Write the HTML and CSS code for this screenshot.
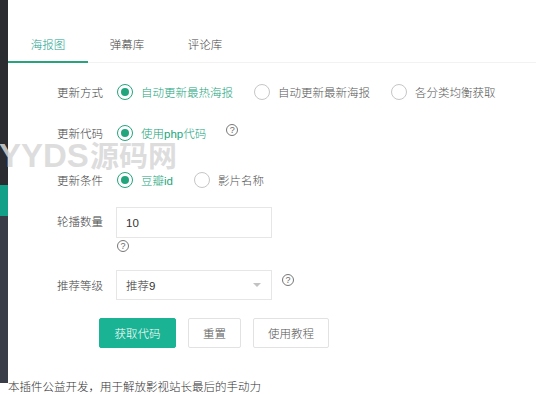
FILE: index.html
```html
<!DOCTYPE html>
<html lang="zh-CN">
<head>
    <meta charset="UTF-8">
    <meta name="viewport" content="width=device-width, initial-scale=1.0">
    <title>海报图</title>
    <link rel="stylesheet" href="styles.css">
</head>
<body>
    <div class="sidebar">
        <div class="side-top"></div>
        <div class="side-active"></div>
        <div class="side-rest"></div>
    </div>

    <div class="main">
        <div class="tabs">
            <span class="tab active">海报图</span>
            <span class="tab">弹幕库</span>
            <span class="tab">评论库</span>
        </div>

        <div class="form">
            <div class="row row-mode">
                <label class="label">更新方式</label>
                <span class="radio checked"><i class="dot"></i>自动更新最热海报</span>
                <span class="radio"><i class="dot"></i>自动更新最新海报</span>
                <span class="radio"><i class="dot"></i>各分类均衡获取</span>
            </div>

            <div class="row row-code">
                <label class="label">更新代码</label>
                <span class="radio checked"><i class="dot"></i>使用php代码</span>
                <span class="help help-code">?</span>
            </div>

            <div class="row row-cond">
                <label class="label">更新条件</label>
                <span class="radio checked"><i class="dot"></i>豆瓣id</span>
                <span class="radio"><i class="dot"></i>影片名称</span>
            </div>

            <div class="row row-num">
                <label class="label">轮播数量</label>
                <div class="field">
                    <input class="input" type="text" value="10">
                    <span class="help help-under">?</span>
                </div>
            </div>

            <div class="row row-level">
                <label class="label">推荐等级</label>
                <div class="select">
                    <span>推荐9</span>
                    <i class="arrow"></i>
                </div>
                <span class="help help-level">?</span>
            </div>

            <div class="buttons">
                <button class="btn btn-primary">获取代码</button>
                <button class="btn btn-reset">重置</button>
                <button class="btn btn-help">使用教程</button>
            </div>
        </div>

        <p class="note">本插件公益开发，用于解放影视站长最后的手动力</p>
    </div>

    <div class="watermark"><span class="wm-latin">YYDS</span>源码网</div>
</body>
</html>
```

FILE: styles.css
```css
body {
    margin: 0;
    font-family: "Liberation Sans", "Noto Sans CJK SC", sans-serif;
    font-size: 11.5px;
    font-weight: 300;
    color: #444;
    display: flex;
    align-items: flex-start;
    background: #fff;
}
.sidebar {
    width: 8px;
    flex-shrink: 0;
    display: flex;
    flex-direction: column;
}
.side-top {
    height: 185px;
    background-color: #2a2c32;
}
.side-active {
    height: 31px;
    background-color: #12a089;
}
.side-rest {
    height: 167px;
    background-color: #393d48;
}
.main {
    flex: 1;
    margin-left: -8px;
    padding-left: 8px;
    min-width: 0;
}
.tabs {
    margin-top: 28px;
    height: 34px;
    border-bottom: 1px solid #f2f2f2;
    display: flex;
}
.tab {
    width: 78px;
    line-height: 34px;
    text-align: center;
    color: #444;
}
.tab.active {
    width: 80px;
    color: #21a38f;
    border-bottom: 2px solid #2aa37d;
    height: 33px;
}
.row {
    display: flex;
    align-items: center;
    height: 30px;
}
.row-mode { margin-top: 14px; }
.row-code { margin-top: 11px; }
.row-cond { margin-top: 17px; }
.row-num {
    margin-top: 12px;
    height: auto;
    align-items: flex-start;
}
.row-level { margin-top: 18px; }
.label {
    width: 95px;
    padding-right: 5px;
    margin-right: 9px;
    text-align: right;
    color: #444;
    flex-shrink: 0;
}
.row-num .label {
    line-height: 31px;
}
.radio {
    display: inline-flex;
    align-items: center;
    color: #555;
    margin-right: 21px;
    white-space: nowrap;
}
.dot {
    width: 16px;
    height: 16px;
    box-sizing: border-box;
    border: 1px solid #c6c6c6;
    border-radius: 50%;
    margin-right: 8px;
    display: inline-flex;
    align-items: center;
    justify-content: center;
}
.radio.checked {
    color: #22a57c;
}
.radio.checked .dot {
    border-color: #22a57c;
}
.radio.checked .dot::after {
    content: "";
    width: 8px;
    height: 8px;
    border-radius: 50%;
    background-color: #22a57c;
}
.help {
    width: 12px;
    height: 12px;
    box-sizing: border-box;
    border: 1px solid #777;
    border-radius: 50%;
    font-size: 9px;
    line-height: 10px;
    text-align: center;
    color: #666;
    flex-shrink: 0;
}
.help-code {
    align-self: flex-start;
    margin-top: 6px;
    margin-left: -1px;
}
.field {
    display: flex;
    flex-direction: column;
    margin-left: -1px;
}
.input {
    width: 156px;
    height: 31px;
    box-sizing: border-box;
    border: 1px solid #e6e6e6;
    padding: 0 9px;
    font-family: inherit;
    font-size: 11.5px;
    font-weight: 300;
    color: #333;
    outline: none;
}
.help-under {
    margin-top: 2px;
    margin-left: 1px;
}
.select {
    width: 156px;
    height: 30px;
    box-sizing: border-box;
    border: 1px solid #e6e6e6;
    padding: 0 9px;
    margin-left: -1px;
    display: flex;
    align-items: center;
    justify-content: space-between;
    color: #333;
}
.arrow {
    width: 0;
    height: 0;
    border-left: 4px solid transparent;
    border-right: 4px solid transparent;
    border-top: 4px solid #c2c2c2;
    margin-right: 1px;
}
.help-level {
    align-self: flex-start;
    margin-top: 4px;
    margin-left: 10px;
}
.buttons {
    margin-top: 18px;
    margin-left: 91px;
    display: flex;
    gap: 12px;
}
.btn {
    height: 30px;
    padding: 0;
    border: 1px solid #e2e2e2;
    background-color: #fff;
    color: #555;
    font-family: inherit;
    font-size: 11.5px;
    font-weight: 300;
    border-radius: 2px;
    text-align: center;
}
.btn-primary {
    width: 77px;
    background-color: #1ab394;
    border-color: #1ab394;
    color: #fff;
}
.btn-reset {
    width: 53px;
}
.btn-help {
    width: 76px;
}
.note {
    margin: 32px 0 0;
    line-height: 14px;
    color: #333;
}
.watermark {
    position: absolute;
    left: -1px;
    top: 137px;
    font-family: "Liberation Sans", "Noto Sans CJK SC", sans-serif;
    font-weight: bold;
    font-size: 29px;
    line-height: 38px;
    color: rgba(215, 215, 215, 0.85);
    pointer-events: none;
}
.wm-latin {
    font-size: 33px;
    margin-right: 1px;
}
```
